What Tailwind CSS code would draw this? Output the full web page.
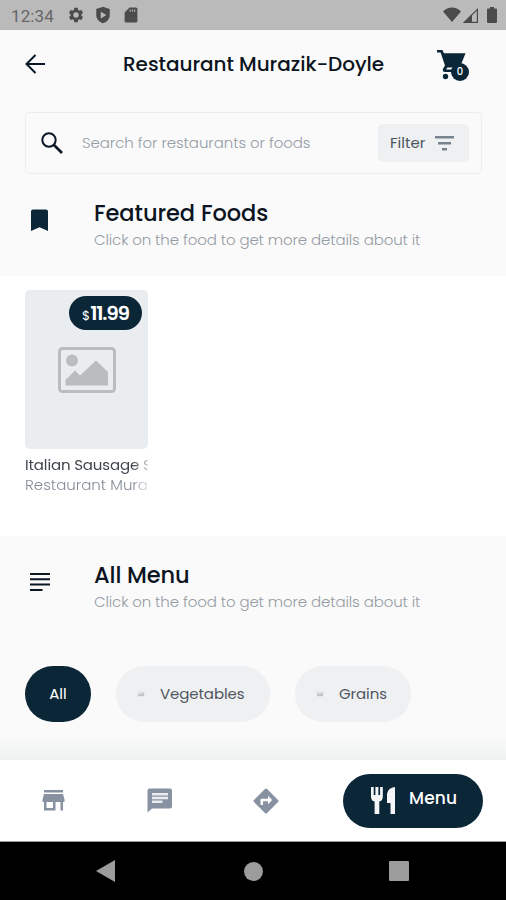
<!DOCTYPE html>
<html lang="en">
<head>
<meta charset="utf-8">
<title>Restaurant menu</title>
<script src="https://cdn.jsdelivr.net/npm/@tailwindcss/browser@4"></script>
</head>
<body class="w-[506px] h-[900px] overflow-hidden bg-[#fafafa] font-[Poppins,Inter,sans-serif] text-[#0b1420] whitespace-nowrap">
<div class="flex flex-col h-[900px]">
  <!-- Status bar -->
  <div class="h-[30px] shrink-0 bg-[#bababa] flex items-center pl-[11px] pr-[7px] text-[#4b4b4b]">
    <span class="font-[Roboto,sans-serif] text-[17px] leading-[20px] text-[#666] w-[57px] pt-[1px] tracking-[0.1px]">12:34</span>
    <svg class="w-[18px] h-[18px] -ml-[1px]" viewBox="0 0 24 24" fill="currentColor"><path d="M19.14 12.94c.04-.3.06-.61.06-.94 0-.32-.02-.64-.07-.94l2.03-1.58a.5.5 0 0 0 .12-.61l-1.92-3.32a.49.49 0 0 0-.59-.22l-2.39.96a7 7 0 0 0-1.62-.94l-.36-2.54A.48.48 0 0 0 13.920 2.400h-3.840a.48.48 0 0 0-.47.41l-.36 2.54c-.59.24-1.130.57-1.620.94l-2.390-.96a.48.48 0 0 0-.59.22L2.740 8.870a.47.47 0 0 0 .12.61l2.030 1.580c-.05.3-.09.63-.09.94s.02.64.07.94l-2.030 1.580a.5.5 0 0 0-.12.61l1.920 3.320c.12.22.37.29.59.22l2.390-.96c.5.38 1.030.7 1.620.94l.36 2.540c.05.24.24.41.48.41h3.840c.24 0 .44-.17.47-.41l.36-2.540c.59-.24 1.130-.56 1.620-.94l2.390.96c.22.08.47 0 .59-.22l1.920-3.320a.47.47 0 0 0-.12-.61zM12 15.600a3.600 3.600 0 1 1 0-7.200 3.600 3.600 0 0 1 0 7.200z"/></svg>
    <svg class="w-[18px] h-[18px] ml-[9px]" viewBox="0 0 24 24"><path fill="currentColor" d="M12 1 3 4v8c0 5.200 3.800 9.500 9 11 5.200-1.500 9-5.800 9-11V4z"/><path fill="#bababa" d="M9 7.500v9l7.500-4.500z"/></svg>
    <svg class="w-[18px] h-[18px] ml-[10px]" viewBox="0 0 24 24" fill="currentColor"><path d="M18.500 2H10L3.500 8.500V20a2 2 0 0 0 2 2h13a2 2 0 0 0 2-2V4a2 2 0 0 0-2-2zM11.600 7.500h-1.400V4.500h1.400zm3 0h-1.400V4.500h1.400zm3 0h-1.400V4.500h1.400z"/></svg>
    <div class="flex items-center ml-auto">
      <svg class="w-[18px] h-[16px]" viewBox="0 0 18 16" fill="currentColor"><path d="M0 4.500C5-.8 13-.8 18 4.500L9 15z"/></svg>
      <svg class="w-[15px] h-[15px] ml-[2px]" viewBox="0 0 15 15"><path fill="currentColor" d="M0 15 9 6v9z"/><path d="M9 14.400h5.400V1.400L1.400 14.400z" fill="none" stroke="currentColor" stroke-width="1.200"/></svg>
      <svg class="w-[10px] h-[16px] ml-[9px] mr-[2px]" viewBox="0 0 10 16" fill="currentColor"><path d="M3 0h4v1.500h2a1 1 0 0 1 1 1V15a1 1 0 0 1-1 1H1a1 1 0 0 1-1-1V2.500a1 1 0 0 1 1-1h2z"/></svg>
    </div>
  </div>

  <!-- Title bar -->
  <header class="h-[68px] shrink-0 flex items-center pl-[25px] pr-[36px]">
    <svg class="w-[20px] h-[20px]" viewBox="0 0 20 20" fill="none" stroke="#08162a" stroke-width="2"><path d="M20 10H2M10.500 1 1.500 10l9 9"/></svg>
    <h1 class="ml-[78px] text-[20px] leading-[28px] font-medium tracking-[-0.04px]">Restaurant Murazik-Doyle</h1>
    <div class="relative ml-auto w-[33px] h-[33px]">
      <svg class="absolute left-0 top-[2px] w-[30px] h-[30px]" viewBox="0 0 30 30" fill="#0b2637"><path d="M0 0h5.400l1.500 3.300H28.500l-5 12.500q-.7 1.700-2.500 1.700H10.500L9 19.600H24v2.400H8q-3-.3-2-3.200L8 15.500 3.600 2.500H0z"/><circle cx="8.500" cy="26.500" r="2.700"/></svg>
      <span class="absolute left-[14px] top-[15px] w-[18px] h-[18px] rounded-full bg-[#0b2637] text-white text-[10px] leading-[18px] font-medium text-center">0</span>
    </div>
  </header>

  <!-- Search -->
  <div class="mt-[14px] mx-6 ml-[25px] h-[62px] shrink-0 border border-[#ebedef] rounded-[4px] flex items-center pl-[15px] pr-[12px]">
    <svg class="w-[22px] h-[22px] -mt-px" viewBox="0 0 22 22" fill="none" stroke="#0b1626"><circle cx="8" cy="8" r="6.700" stroke-width="2"/><path d="m13 13 8 8" stroke-width="2.600"/></svg>
    <span class="ml-[19px] text-[15px] leading-[20px] font-light text-[#959da7] tracking-[-0.08px]">Search for restaurants or foods</span>
    <button class="ml-auto w-[91px] h-[38px] rounded-[5px] bg-[#eef0f2] flex items-center pl-[12px] text-[#4c5560]">
      <span class="text-[15px] leading-[20px] w-[45px] text-left tracking-[0px]">Filter</span>
      <svg class="w-[19px] h-[15px]" viewBox="0 0 19 15" fill="#78838d"><path d="M0 0h19v2.500H0zM3 6h13v2.500H3zM7 12h5v2.500H7z"/></svg>
    </button>
  </div>

  <!-- Featured heading -->
  <section class="h-[102px] shrink-0 flex pl-[30px] pt-[24px]">
    <svg class="mt-[11px] w-[19px] h-[23px]" viewBox="0 0 19 23" fill="#0b2637"><path d="M1 2.500A2 2 0 0 1 3 .5h13a2 2 0 0 1 2 2V22l-8.500-3.700L1 22z"/></svg>
    <div class="ml-[45px]">
      <h2 class="text-[22.5px] leading-[30px] font-medium tracking-[-0.05px]">Featured Foods</h2>
      <p class="text-[15px] leading-[24px] font-light text-[#959ca5] tracking-[-0.12px]">Click on the food to get more details about it</p>
    </div>
  </section>

  <!-- Featured foods -->
  <section class="h-[260px] shrink-0 bg-white pl-[25px] pt-[14px]">
    <div class="relative w-[123px] h-[159px] rounded-[5px] bg-[#e9edf0] flex justify-center pt-[57px]">
      <svg class="w-[58px] h-[46px]" viewBox="0 0 58 46"><rect x="1.500" y="1.500" width="55" height="43" rx="3" fill="none" stroke="#b9bdc0" stroke-width="3"/><circle cx="14" cy="13.500" r="6" fill="#b9bdc0"/><path fill="#b9bdc0" d="M7.500 38.500V33L17 23.500l5 5L38 13.500 50 25v13.500z"/></svg>
      <div class="absolute right-[6px] top-[6px] w-[73px] h-[34px] rounded-full bg-[#0b2637] text-white flex items-baseline justify-center leading-[34px]">
        <span class="text-[13px]">$</span><span class="text-[20px] font-semibold tracking-[-1.2px]">11.99</span>
      </div>
    </div>
    <div class="w-[123px] mt-[6px] overflow-hidden text-[15px] leading-[20px]">
      <p class="text-[#3f454d] tracking-[-0.15px] [mask-image:linear-gradient(to_right,black_108px,transparent_128px)]">Italian Sausage Soup</p>
      <p class="font-light text-[#858d99] tracking-[0px] [mask-image:linear-gradient(to_right,black_108px,transparent_128px)]">Restaurant Murazik-Doyle</p>
    </div>
  </section>

  <!-- All menu -->
  <section class="h-[224px] shrink-0">
    <div class="flex pl-[30px] pt-[24px]">
      <svg class="mt-[13px] w-[20px] h-[19px]" viewBox="0 0 20 19" fill="#0c1724"><path d="M0 0h20v2H0zM0 5.300h20v2H0zM0 10.600h20v2H0zM0 15.900h12.500v2H0z"/></svg>
      <div class="ml-[44px]">
        <h2 class="text-[22.5px] leading-[30px] font-medium tracking-[-0.1px]">All Menu</h2>
        <p class="text-[15px] leading-[24px] font-light text-[#959ca5] tracking-[-0.12px]">Click on the food to get more details about it</p>
      </div>
    </div>
    <div class="flex mt-[52px] pl-[25px] h-[56px] text-[15px] tracking-[-0.1px] text-[#4f5660]">
      <div class="w-[66px] rounded-[28px] bg-[#0b2637] text-white flex items-center justify-center tracking-normal">All</div>
      <div class="ml-[25px] w-[154px] rounded-[28px] bg-[#eef0f2] flex items-center pl-[21px]">
        <svg class="w-[8px] h-[6px] mr-[15px]" viewBox="0 0 8 6"><path d="M.5.5h7v5h-7z" fill="#dfe3e6"/><path d="M1 5V4l2-1.500 1 1L6 1.500l1 1V5z" fill="#bfc4c9"/></svg>
        <span>Vegetables</span>
      </div>
      <div class="ml-[25px] w-[116px] rounded-[28px] bg-[#eef0f2] flex items-center pl-[21px]">
        <svg class="w-[8px] h-[6px] mr-[15px]" viewBox="0 0 8 6"><path d="M.5.5h7v5h-7z" fill="#dfe3e6"/><path d="M1 5V4l2-1.500 1 1L6 1.500l1 1V5z" fill="#bfc4c9"/></svg>
        <span>Grains</span>
      </div>
    </div>
    <div class="h-[38px] bg-linear-to-b from-[#fafafa] from-40% to-[#eff1f2]"></div>
  </section>

  <!-- Bottom navigation -->
  <nav class="h-[82px] shrink-0 bg-white flex items-center pl-[42px] border-b border-[#999] text-[#8791a2]">
    <svg class="w-[23px] h-[21px]" viewBox="0 0 23 21" fill="currentColor"><path fill-rule="evenodd" d="M2 0h19v2.400H2zM2 4h19l1.500 5.500V12h-1.500v8.500h-2.500V12h-5v8.500H2V12H.5V9.500zM4.500 12v6h6.500v-6z"/></svg>
    <svg class="w-[26px] h-[25px] ml-[82px]" viewBox="0 0 26 25"><path fill="currentColor" d="M3 .5h20a2 2 0 0 1 2 2V18.500a2 2 0 0 1-2 2H5l-4.500 4v-22a2 2 0 0 1 2-2z"/><path fill="#e9ecef" d="M5 5h16v2.500H5zM5 8.800h16v2.500H5zM5 12.600h10.500v2.500H5z"/></svg>
    <svg class="w-[26px] h-[26px] ml-[80px]" viewBox="0 0 26 26" fill="currentColor"><path fill-rule="evenodd" d="M11.900 1 1 11.900a1.500 1.500 0 0 0 0 2.200L11.900 25a1.500 1.500 0 0 0 2.200 0L25 14.100a1.500 1.500 0 0 0 0-2.200L14.100 1a1.500 1.500 0 0 0-2.200 0zM15 16.300v-3h-5v3.800H7.500v-5a1.300 1.300 0 0 1 1.300-1.300H15V7.700l4.300 4.300z"/></svg>
    <button class="ml-[64px] w-[140px] h-[54px] rounded-full bg-[#0b2637] text-white flex items-center pl-[28px]">
      <svg class="w-[24px] h-[27px]" viewBox="0 0 24 27" fill="#f4f6f8"><path d="M0 0h2.700v8h1.700V0h3v8h1.700V0h2.700v10q-.3 4-3.500 4.600V27H3.600V14.600Q.3 14 0 10zM16 7q.8-6 8-7v27h-4.500V16H16z"/></svg>
      <span class="ml-[14px] pb-[3px] text-[17px] font-medium tracking-[0.15px]">Menu</span>
    </button>
  </nav>

  <!-- System navigation -->
  <div class="h-[58px] shrink-0 bg-black flex items-center pl-[96px] text-[#9c9c9c]">
    <svg class="w-[19px] h-[22px]" viewBox="0 0 19 22" fill="currentColor"><path d="M19 0v22L0 11z"/></svg>
    <div class="ml-[129px] w-[19px] h-[19px] rounded-full bg-[#9c9c9c]"></div>
    <div class="ml-[126px] w-[20px] h-[20px] rounded-[1px] bg-[#9c9c9c]"></div>
  </div>
</div>
</body>
</html>
